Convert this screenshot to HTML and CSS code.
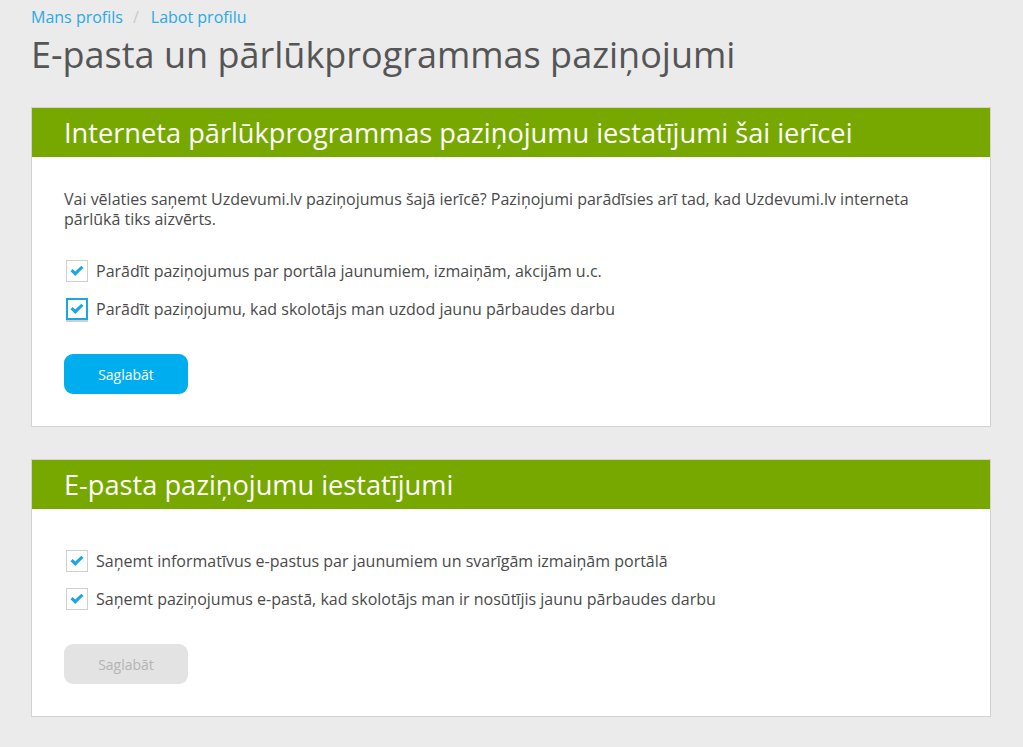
FILE: index.html
```html
<!DOCTYPE html>
<html lang="lv">
<head>
<meta charset="utf-8">
<link rel="stylesheet" href="styles.css">
</head>
<body>
<div class="page">
  <nav class="crumbs">
    <a href="#">Mans profils</a><span class="sep">/</span><a href="#">Labot profilu</a>
  </nav>
  <h1 class="title">E-pasta un pārlūkprogrammas paziņojumi</h1>

  <section class="card">
    <h2 class="card-head">Interneta pārlūkprogrammas paziņojumu iestatījumi šai ierīcei</h2>
    <div class="card-body">
      <p class="intro">Vai vēlaties saņemt Uzdevumi.lv paziņojumus šajā ierīcē? Paziņojumi parādīsies arī tad, kad Uzdevumi.lv interneta pārlūkā tiks aizvērts.</p>
      <ul class="checks">
        <li class="check"><span class="box"><svg viewBox="0 0 16 13" width="14" height="12"><path d="M0.6 6.8 L3 4.3 L6 7.2 L13 0.4 L15.4 2.8 L6 12.2 Z" fill="#1aa6e4"/></svg></span>Parādīt paziņojumus par portāla jaunumiem, izmaiņām, akcijām u.c.</li>
        <li class="check"><span class="box focus"><svg viewBox="0 0 16 13" width="14" height="12"><path d="M0.6 6.8 L3 4.3 L6 7.2 L13 0.4 L15.4 2.8 L6 12.2 Z" fill="#1aa6e4"/></svg></span>Parādīt paziņojumu, kad skolotājs man uzdod jaunu pārbaudes darbu</li>
      </ul>
      <button class="btn btn-primary">Saglabāt</button>
    </div>
  </section>

  <section class="card">
    <h2 class="card-head">E-pasta paziņojumu iestatījumi</h2>
    <div class="card-body body-compact">
      <ul class="checks">
        <li class="check"><span class="box"><svg viewBox="0 0 16 13" width="14" height="12"><path d="M0.6 6.8 L3 4.3 L6 7.2 L13 0.4 L15.4 2.8 L6 12.2 Z" fill="#1aa6e4"/></svg></span>Saņemt informatīvus e-pastus par jaunumiem un svarīgām izmaiņām portālā</li>
        <li class="check"><span class="box"><svg viewBox="0 0 16 13" width="14" height="12"><path d="M0.6 6.8 L3 4.3 L6 7.2 L13 0.4 L15.4 2.8 L6 12.2 Z" fill="#1aa6e4"/></svg></span>Saņemt paziņojumus e-pastā, kad skolotājs man ir nosūtījis jaunu pārbaudes darbu</li>
      </ul>
      <button class="btn btn-disabled">Saglabāt</button>
    </div>
  </section>
</div>
</body>
</html>
```
FILE: styles.css
```css
* { box-sizing: border-box; }
html, body { margin: 0; padding: 0; }
body {
  background: #ebebeb;
  font-family: "Open Sans", "Noto Sans", sans-serif;
  color: #4a4a4a;
}
.page {
  padding: 5px 32px 30px 31px;
}
.crumbs {
  font-size: 16px;
  line-height: 24px;
}
.crumbs a {
  color: #29a9e6;
  text-decoration: none;
}
.crumbs .sep {
  color: #c8c8c8;
  margin: 0 12px 0 10px;
}
.title {
  margin: 4px 0 30px 0;
  font-weight: 400;
  font-size: 36px;
  line-height: 44px;
  color: #555;
}
.card {
  background: #fff;
  border: 1px solid #d2d2d2;
  margin-bottom: 32px;
}
.card-head {
  margin: 0;
  background: #76a800;
  color: #fff;
  font-weight: 400;
  font-size: 27.2px;
  line-height: 49px;
  padding: 0 32px;
}
.card-body {
  padding: 32px 32px 32px 32px;
}
.body-compact { padding-top: 41px; }
.intro {
  margin: 0 0 31px 0;
  max-width: 860px;
  font-size: 16px;
  line-height: 20px;
  color: #4a4a4a;
}
.checks {
  list-style: none;
  margin: 0 0 34px 0;
  padding: 0;
  display: flex;
  flex-direction: column;
  gap: 16px;
}
.check {
  display: flex;
  align-items: center;
  gap: 8px;
  font-size: 16px;
  line-height: 22px;
  color: #4a4a4a;
}
.box {
  width: 22px;
  height: 22px;
  margin-left: 2px;
  border: 1px solid #d0d0d0;
  background: #fff;
  display: flex;
  align-items: center;
  justify-content: center;
  flex: none;
}
.box.focus {
  border: 2px solid #1aa6e4;
  box-shadow: 0 2px 0 #d0d0d0;
}
.btn {
  width: 124px;
  height: 40px;
  border: 0;
  border-radius: 9px;
  font-family: "Open Sans", "Noto Sans", sans-serif;
  font-size: 14px;
  display: block;
}
.btn-primary {
  background: #00aeef;
  color: #fff;
}
.btn-disabled {
  background: #e3e3e3;
  color: #b4b4b4;
}
```
